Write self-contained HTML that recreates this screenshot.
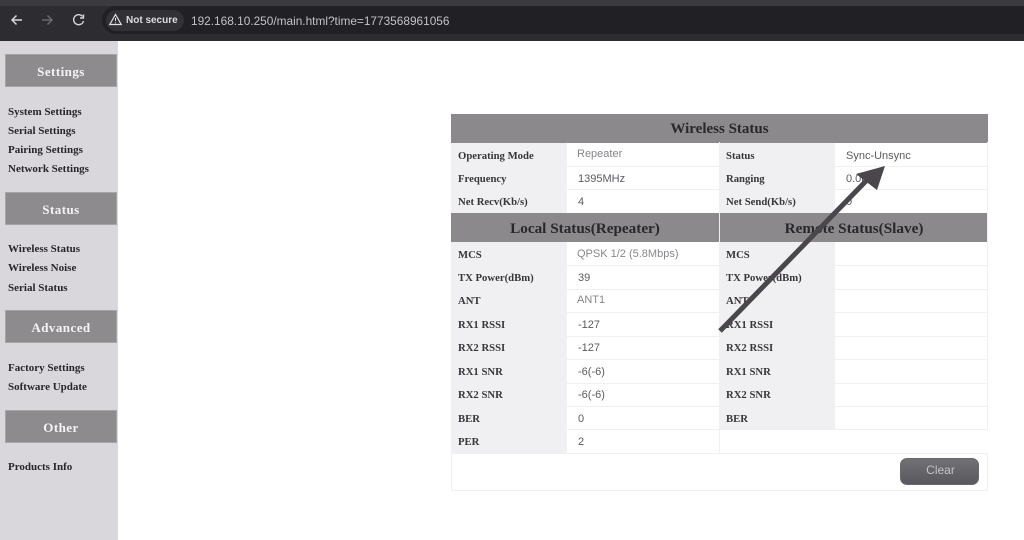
<!DOCTYPE html>
<html><head><meta charset="utf-8"><style>
html,body{margin:0;padding:0;width:1024px;height:540px;overflow:hidden;background:#fff}
#w{position:absolute;left:0;top:0;width:1024px;height:540px;filter:blur(.35px)}
#w div{position:absolute;white-space:nowrap;box-sizing:border-box}
.a{font-family:"Liberation Sans",sans-serif}
#w .h{left:5px;width:112px;height:33px;background:#8d8b8e;color:#f4f4f4;font:bold 13px/33px "Liberation Serif",serif;text-align:center;letter-spacing:.45px;border:1px solid #a5a4a7}
#w .m{left:8px;font:bold 11px/14px "Liberation Serif",serif;color:#27262b}
.l{font:bold 10.7px/14px "Liberation Serif",serif;color:#38363b}
.v{font:11px/14px "Liberation Sans",sans-serif;color:#5b5a5e}
.g{color:#87868a}
.b{background:#f0eff1}
.r{background:#f0eff3;height:1px}
.c{background:#f0eff3;width:1px}
.t{background:#8b898c;color:#29272c;font:bold 15.200px/32px "Liberation Serif",serif;text-align:center}
</style></head><body><div id="w">
<div style="left:0;top:0;width:1024px;height:41px;background:#2d2c30"></div>
<div style="left:0;top:0;width:1024px;height:6px;background:#3b3a3e"></div>
<div style="left:102px;top:6px;width:922px;height:28px;background:#212024;border-radius:14px 0 0 14px"></div>
<div style="left:106px;top:10px;width:78px;height:21px;background:#323135;border-radius:11px"></div>
<svg style="position:absolute;left:0;top:0" width="240" height="41" fill="none">
<path d="M22 20H12M16.500 15.500L12 20L16.500 24.500" stroke="#d6d5d8" stroke-width="1.500"/>
<path d="M42 20H52M47.500 15.500L52 20L47.500 24.500" stroke="#6b6a6e" stroke-width="1.500"/>
<path d="M82.500 16.500A5 5 0 1 0 83.500 21M83.500 14.500V18H80" stroke="#d6d5d8" stroke-width="1.400"/>
<path d="M115.500 14.500L109.800 24.500H121.200Z" stroke="#e0dfe2" stroke-width="1.200"/>
<path d="M115.500 18V21M115.500 22.200V23.200" stroke="#e0dfe2" stroke-width="1"/>
</svg>
<div class="a" style="left:126px;top:14px;font-size:10px;line-height:14px;font-weight:bold;color:#dddce0">Not secure</div>
<div class="a" style="left:191px;top:13px;font-size:11.850px;line-height:16px;color:#c3c2c6">192.168.10.250/main.html?time=1773568961056</div>

<div style="left:0;top:41px;width:118px;height:499px;background:#d9d7db"></div>
<div class="h" style="top:54px">Settings</div>
<div class="m" style="top:105px">System Settings</div>
<div class="m" style="top:124px">Serial Settings</div>
<div class="m" style="top:143px">Pairing Settings</div>
<div class="m" style="top:162px">Network Settings</div>
<div class="h" style="top:192px">Status</div>
<div class="m" style="top:242px">Wireless Status</div>
<div class="m" style="top:261px">Wireless Noise</div>
<div class="m" style="top:281px">Serial Status</div>
<div class="h" style="top:310px">Advanced</div>
<div class="m" style="top:361px">Factory Settings</div>
<div class="m" style="top:380px">Software Update</div>
<div class="h" style="top:410px">Other</div>
<div class="m" style="top:460px">Products Info</div>

<div class="b" style="left:451px;top:142px;width:116px;height:311px"></div>
<div class="b" style="left:719px;top:142px;width:116px;height:288px"></div>
<div class="t" style="left:451px;top:114px;width:537px;height:29px;font-size:15px;line-height:30px">Wireless Status</div>
<div class="t" style="left:451px;top:213px;width:268px;height:29px">Local Status(Repeater)</div>
<div class="t" style="left:720px;top:213px;width:268px;height:29px">Remote Status(Slave)</div>

<div class="r" style="left:451px;top:166px;width:537px"></div>
<div class="r" style="left:451px;top:189px;width:537px"></div>
<div class="r" style="left:451px;top:265px;width:537px"></div>
<div class="r" style="left:451px;top:289px;width:537px"></div>
<div class="r" style="left:451px;top:312px;width:537px"></div>
<div class="r" style="left:451px;top:336px;width:537px"></div>
<div class="r" style="left:451px;top:359px;width:537px"></div>
<div class="r" style="left:451px;top:383px;width:537px"></div>
<div class="r" style="left:451px;top:406px;width:537px"></div>
<div class="r" style="left:451px;top:429px;width:537px"></div>
<div class="r" style="left:451px;top:453px;width:537px"></div>
<div class="r" style="left:451px;top:490px;width:537px"></div>
<div class="c" style="left:451px;top:453px;height:38px"></div>
<div class="c" style="left:987px;top:142px;height:288px"></div>
<div class="c" style="left:987px;top:453px;height:38px"></div>
<div class="c" style="left:719px;top:142px;height:311px"></div>

<div class="l" style="left:458px;top:149px">Operating Mode</div>
<div class="l" style="left:458px;top:172px">Frequency</div>
<div class="l" style="left:458px;top:195px">Net Recv(Kb/s)</div>
<div class="l" style="left:458px;top:248px">MCS</div>
<div class="l" style="left:458px;top:271px">TX Power(dBm)</div>
<div class="l" style="left:458px;top:294px">ANT</div>
<div class="l" style="left:458px;top:318px">RX1 RSSI</div>
<div class="l" style="left:458px;top:341px">RX2 RSSI</div>
<div class="l" style="left:458px;top:365px">RX1 SNR</div>
<div class="l" style="left:458px;top:388px">RX2 SNR</div>
<div class="l" style="left:458px;top:412px">BER</div>
<div class="l" style="left:458px;top:435px">PER</div>

<div class="v g" style="left:577px;top:147px">Repeater</div>
<div class="v" style="left:578px;top:172px">1395MHz</div>
<div class="v" style="left:578px;top:195px">4</div>
<div class="v g" style="left:577px;top:247px">QPSK 1/2 (5.8Mbps)</div>
<div class="v" style="left:578px;top:271px">39</div>
<div class="v g" style="left:577px;top:293px">ANT1</div>
<div class="v" style="left:578px;top:318px">-127</div>
<div class="v" style="left:578px;top:341px">-127</div>
<div class="v" style="left:578px;top:365px">-6(-6)</div>
<div class="v" style="left:578px;top:388px">-6(-6)</div>
<div class="v" style="left:578px;top:412px">0</div>
<div class="v" style="left:578px;top:435px">2</div>

<div class="l" style="left:726px;top:149px">Status</div>
<div class="l" style="left:726px;top:172px">Ranging</div>
<div class="l" style="left:726px;top:195px">Net Send(Kb/s)</div>
<div class="l" style="left:726px;top:248px">MCS</div>
<div class="l" style="left:726px;top:271px">TX Power(dBm)</div>
<div class="l" style="left:726px;top:294px">ANT</div>
<div class="l" style="left:726px;top:318px">RX1 RSSI</div>
<div class="l" style="left:726px;top:341px">RX2 RSSI</div>
<div class="l" style="left:726px;top:365px">RX1 SNR</div>
<div class="l" style="left:726px;top:388px">RX2 SNR</div>
<div class="l" style="left:726px;top:412px">BER</div>

<div class="v" style="left:846px;top:149px">Sync-Unsync</div>
<div class="v" style="left:846px;top:172px">0.0km</div>
<div class="v" style="left:846px;top:195px">0</div>

<div style="left:900px;top:458px;width:79px;height:27px;border-radius:7px;background:linear-gradient(#727175,#59585c);border:1px solid #69686c"></div>
<div class="a" style="left:901px;top:463px;width:79px;text-align:center;font-size:12px;line-height:15px;color:#c4c3c6">Clear</div>

<svg style="position:absolute;left:0;top:0" width="1024" height="540">
<path d="M720 331L866 181" stroke="#49474b" stroke-width="5" fill="none"/>
<path d="M885 166L856 174L877 190Z" fill="#49474b"/>
</svg>
</div></body></html>
